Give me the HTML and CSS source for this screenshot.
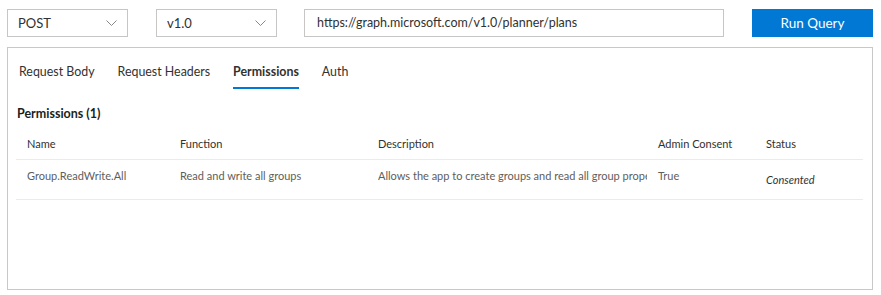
FILE: index.html
```html
<!DOCTYPE html>
<html>
<head>
<meta charset="utf-8">
<link rel="stylesheet" href="styles.css">
</head>
<body>
<div class="page">
  <div class="toolbar">
    <div class="select"><span>POST</span><svg class="chev" width="11" height="6" viewBox="0 0 11 6"><path d="M0.5 0.5 L5.5 5.5 L10.5 0.5" fill="none" stroke="#8a8886" stroke-width="1"/></svg></div>
    <div class="select"><span>v1.0</span><svg class="chev" width="11" height="6" viewBox="0 0 11 6"><path d="M0.5 0.5 L5.5 5.5 L10.5 0.5" fill="none" stroke="#8a8886" stroke-width="1"/></svg></div>
    <div class="url">https://graph.microsoft.com/v1.0/planner/plans</div>
    <button class="run">Run Query</button>
  </div>
  <div class="panel">
    <div class="tabs">
      <div class="tab">Request Body</div>
      <div class="tab">Request Headers</div>
      <div class="tab active">Permissions</div>
      <div class="tab">Auth</div>
    </div>
    <div class="section-title">Permissions (1)</div>
    <div class="table">
      <div class="row head">
        <div class="cell c1">Name</div>
        <div class="cell c2">Function</div>
        <div class="cell c3">Description</div>
        <div class="cell c4">Admin Consent</div>
        <div class="cell c5">Status</div>
      </div>
      <div class="row data">
        <div class="cell c1">Group.ReadWrite.All</div>
        <div class="cell c2">Read and write all groups</div>
        <div class="cell c3"><div class="clip">Allows the app to create groups and read all group properties</div></div>
        <div class="cell c4">True</div>
        <div class="cell c5 status">Consented</div>
      </div>
    </div>
  </div>
</div>
</body>
</html>
```
FILE: styles.css
```css
html, body {
  margin: 0;
  padding: 0;
  background: #ffffff;
}
body {
  font-family: "Lato", "Open Sans", sans-serif;
  color: #323130;
}
.page {
  padding: 9px 0 0 7px;
  width: 866px;
}
.toolbar {
  display: flex;
  align-items: center;
  height: 28px;
}
.select {
  box-sizing: border-box;
  width: 121px;
  height: 28px;
  border: 1px solid #c8c6c4;
  display: flex;
  align-items: center;
  justify-content: space-between;
  padding: 0 10px 0 10px;
  font-size: 13px;
  color: #323130;
  margin-right: 28px;
}
.select + .select {
  margin-right: 27px;
}
.chev {
  display: block;
}
.url {
  box-sizing: border-box;
  width: 420px;
  height: 28px;
  border: 1px solid #c8c6c4;
  padding: 0 12px;
  font-size: 12.5px;
  line-height: 26px;
  color: #323130;
  margin-right: 28px;
}
.run {
  box-sizing: border-box;
  width: 121px;
  height: 28px;
  border: none;
  background: #0078d4;
  color: #ffffff;
  font-family: inherit;
  font-size: 13.5px;
  padding: 0;
}
.panel {
  box-sizing: border-box;
  margin-top: 10px;
  width: 866px;
  height: 243px;
  border: 1px solid #c8c8c8;
  padding: 0 9px 0 8px;
}
.tabs {
  display: flex;
  gap: 23px;
  padding-left: 3px;
  height: 41px;
}
.tab {
  box-sizing: border-box;
  height: 41px;
  padding-top: 15px;
  font-size: 12.4px;
  line-height: 18px;
  color: #323130;
  border-bottom: 2px solid transparent;
}
.tab.active {
  font-weight: 700;
  border-bottom-color: #0078d4;
}
.section-title {
  margin-top: 16px;
  font-size: 12.5px;
  font-weight: 700;
  line-height: 18px;
  color: #201f1e;
  padding-left: 1px;
}
.table {
  margin-top: 4px;
  width: 847px;
}
.row {
  display: flex;
  border-bottom: 1px solid #edebe9;
}
.row.head {
  height: 32px;
  align-items: center;
}
.row.data {
  height: 39px;
  align-items: flex-start;
}
.cell {
  box-sizing: border-box;
  padding-left: 11px;
  font-size: 11px;
  white-space: nowrap;
}
.clip {
  width: 269px;
  overflow: hidden;
  white-space: nowrap;
}
.row.head .cell {
  color: #323130;
  padding-top: 1px;
}
.row.data .cell {
  color: #605e5c;
  padding-top: 9px;
}
.c1 { width: 153px; }
.c2 { width: 198px; }
.c3 { width: 280px; }
.c4 { width: 108px; }
.c5 { width: 108px; }
.row.data .cell.status {
  font-style: italic;
  color: #323130;
  padding-top: 13px;
}
```
